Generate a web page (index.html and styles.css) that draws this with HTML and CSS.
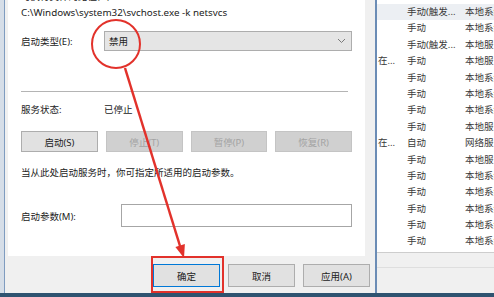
FILE: index.html
```html
<!DOCTYPE html>
<html lang="zh-CN">
<head>
    <meta charset="UTF-8">
    <title>服务属性 - 启动类型</title>
    <link rel="stylesheet" href="styles.css">
</head>
<body>
    <div class="screen">
        <div class="desk">
            <div class="edge"></div>

            <!-- service properties dialog -->
            <div class="dialog">
                <div class="panel">
                    <p class="cut">可执行文件的路径(H):</p>
                    <p class="path">C:\Windows\system32\svchost.exe -k netsvcs</p>

                    <div class="row row-type">
                        <span class="label">启动类型(E):</span>
                        <div class="combo">
                            <span>禁用</span>
                            <svg class="chevron" width="9" height="6" viewBox="0 0 9 6">
                                <polyline points="1,1 4.5,4.5 8,1" fill="none" stroke="#7a7a7a" stroke-width="1"/>
                            </svg>
                        </div>
                    </div>

                    <hr class="sep">

                    <div class="row row-status">
                        <span class="label">服务状态:</span>
                        <span>已停止</span>
                    </div>

                    <div class="actions">
                        <button class="btn">启动(S)</button>
                        <button class="btn" disabled>停止(T)</button>
                        <button class="btn" disabled>暂停(P)</button>
                        <button class="btn" disabled>恢复(R)</button>
                    </div>

                    <p class="hint">当从此处启动服务时，你可指定所适用的启动参数。</p>

                    <div class="row row-param">
                        <span class="label label-wide">启动参数(M):</span>
                        <div class="field"></div>
                    </div>
                </div>

                <div class="footer">
                    <button class="btn btn-default">确定</button>
                    <button class="btn">取消</button>
                    <button class="btn">应用(A)</button>
                </div>
            </div>

            <!-- services list behind the dialog -->
            <div class="list">
                <div class="rows">
                    <div class="item item-hover"><span class="c1"></span><span class="c2">手动(触发...</span><span class="c3">本地系统</span></div>
                    <div class="item"><span class="c1"></span><span class="c2">手动</span><span class="c3">本地系统</span></div>
                    <div class="item"><span class="c1"></span><span class="c2">手动(触发...</span><span class="c3">本地服务</span></div>
                    <div class="item"><span class="c1">在...</span><span class="c2">手动</span><span class="c3">本地服务</span></div>
                    <div class="item"><span class="c1"></span><span class="c2">手动</span><span class="c3">本地系统</span></div>
                    <div class="item"><span class="c1"></span><span class="c2">手动</span><span class="c3">本地系统</span></div>
                    <div class="item"><span class="c1"></span><span class="c2">手动</span><span class="c3">本地系统</span></div>
                    <div class="item"><span class="c1"></span><span class="c2">手动</span><span class="c3">本地服务</span></div>
                    <div class="item"><span class="c1">在...</span><span class="c2">自动</span><span class="c3">网络服务</span></div>
                    <div class="item"><span class="c1"></span><span class="c2">手动</span><span class="c3">本地服务</span></div>
                    <div class="item"><span class="c1"></span><span class="c2">手动</span><span class="c3">本地系统</span></div>
                    <div class="item"><span class="c1"></span><span class="c2">手动</span><span class="c3">本地系统</span></div>
                    <div class="item"><span class="c1"></span><span class="c2">手动</span><span class="c3">本地系统</span></div>
                    <div class="item"><span class="c1"></span><span class="c2">手动</span><span class="c3">本地系统</span></div>
                    <div class="item"><span class="c1"></span><span class="c2">手动</span><span class="c3">本地系统</span></div>
                </div>
                <div class="status"><div class="status-line"></div></div>
            </div>
        </div>
        <div class="taskbar"></div>

        <!-- red tutorial marks drawn over the screenshot -->
        <svg class="marks" width="494" height="297" viewBox="0 0 494 297">
            <circle cx="116" cy="44" r="24" fill="none" stroke="#e2322b" stroke-width="2"/>
            <line x1="125" y1="68" x2="180" y2="246" stroke="#e2322b" stroke-width="2.5"/>
            <polygon points="184.9,244.1 175.4,247.1 184,258" fill="#e2322b"/>
            <rect x="152" y="257" width="71" height="35" fill="none" stroke="#e2322b" stroke-width="2"/>
        </svg>
    </div>
</body>
</html>
```

FILE: styles.css
```css
body {
    margin: 0;
    font-family: "Noto Sans", "Noto Sans CJK SC", sans-serif;
    font-size: 9.5px;
    color: #222;
}
p {
    margin: 0;
}
.screen {
    position: relative;
    width: 494px;
    height: 297px;
    overflow: hidden;
    background: #f0f0f0;
}
.desk {
    display: flex;
    height: 293px;
}
.edge {
    flex-shrink: 0;
    width: 4px;
    background: #d6dee8;
    border-right: 1px solid #7f9cc0;
}
.taskbar {
    height: 4px;
    background: #2f5370;
}

/* dialog */
.dialog {
    flex-shrink: 0;
    width: 370px;
    display: flex;
    flex-direction: column;
    background: #f0f0f0;
}
.panel {
    height: 256px;
    margin: 0 10px 0 3px;
    padding: 0 13px;
    background: #fff;
    overflow: hidden;
}
.cut {
    margin-top: -9px;
    line-height: 12px;
}
.path {
    margin-top: 4px;
    font-size: 9.8px;
    line-height: 12px;
}
.row {
    display: flex;
    align-items: center;
}
.label {
    width: 83px;
    flex-shrink: 0;
}
.label-wide {
    width: 100px;
}
.row-type {
    margin-top: 12px;
    height: 20px;
}
.combo {
    flex: 1;
    height: 18px;
    display: flex;
    align-items: center;
    justify-content: space-between;
    padding: 0 4px;
    background: #e5e5e5;
    border: 1px solid #adadad;
}
.chevron {
    margin-right: 1px;
}
.sep {
    margin: 40px 4px 0 0;
    height: 1px;
    border: none;
    background: #b4b4b4;
}
.row-status {
    margin-top: 12px;
    line-height: 12px;
}
.actions {
    display: flex;
    gap: 8px;
    margin-top: 15px;
}
.btn {
    font: inherit;
    color: #222;
    width: 77px;
    height: 21px;
    padding: 0;
    background: #e1e1e1;
    border: 1px solid #adadad;
}
.btn:disabled {
    color: #a3a3a3;
    background: #d0d0d0;
    border-color: #c4c4c4;
}
.hint {
    margin-top: 15px;
    line-height: 12px;
}
.row-param {
    margin-top: 25px;
}
.field {
    flex: 1;
    height: 21px;
    border: 1px solid #a6a6a6;
    background: #fff;
}
.footer {
    flex: 1;
    display: flex;
    justify-content: flex-end;
    gap: 8px;
    padding: 8px 5px 0 0;
}
.footer .btn {
    width: 67px;
    height: 23px;
}
.btn-default {
    border-color: #0078d7;
}

/* list */
.list {
    flex: 1;
    min-width: 0;
    display: flex;
    flex-direction: column;
    border-left: 2px solid #6b8cb5;
    background: #fff;
    color: #3a3a3a;
}
.rows {
    flex: 1;
    padding-top: 4px;
    overflow: hidden;
}
.item {
    display: flex;
    height: 16.4px;
    line-height: 16.4px;
    padding-left: 1px;
    white-space: nowrap;
}
.item-hover {
    background: #eceff3;
}
.c1 {
    width: 29px;
    flex-shrink: 0;
}
.c2 {
    width: 58px;
    flex-shrink: 0;
}
.c3 {
    flex: 1;
    overflow: hidden;
}
.status {
    height: 40px;
    border-top: 1px solid #cdcdcd;
    background: #f0f0f0;
}
.status-line {
    margin-top: 14px;
    height: 1px;
    background: #dedede;
}

.marks {
    position: absolute;
    left: 0;
    top: 0;
    pointer-events: none;
}
```
